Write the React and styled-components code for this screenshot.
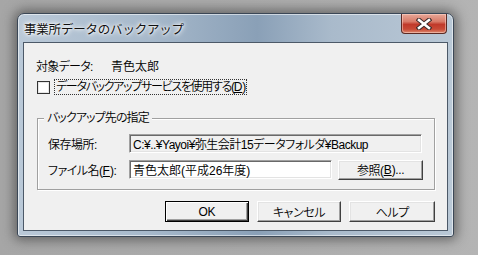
import React from "react";
import styled, { createGlobalStyle } from "styled-components";

const GlobalStyle = createGlobalStyle`
  html, body {
    margin: 0;
    padding: 0;
    background: linear-gradient(90deg, #a6a6a6 0%, #adadad 60%, #b4b4b4 100%);
    width: 478px;
    height: 255px;
    overflow: hidden;
  }
  * {
    box-sizing: border-box;
  }
`;

const Page = styled.div`
  padding: 13px 0 0 17px;
  font-family: "Liberation Sans", "Noto Sans CJK JP", sans-serif;
  font-feature-settings: "palt";
  font-weight: 350;
  font-size: 12px;
  color: #000;
`;

const Window = styled.div`
  width: 437px;
  height: 224px;
  border: 1px solid #3b4756;
  border-radius: 7px 7px 3px 3px;
  background: linear-gradient(90deg, #bac9d8 0%, #a7b9cb 30%, #8aa0b7 55%, #a9bacb 72%, #b9c8d6 100%);
  box-shadow: 0 0 12px 3px rgba(40, 40, 40, 0.55), inset 0 0 0 1px rgba(255, 255, 255, 0.55);
  display: flex;
  flex-direction: column;
`;

const TitleBar = styled.div`
  height: 28px;
  display: flex;
  align-items: flex-start;
  justify-content: space-between;
  padding: 0 6px 0 6px;
`;

const Title = styled.span`
  margin-top: 5px;
  font-family: "Noto Sans CJK JP", sans-serif;
  font-weight: 400;
  font-size: 12.5px;
  font-feature-settings: normal;
  letter-spacing: -0.2px;
  color: #111;
  text-shadow: 0 0 6px #fff, 0 0 4px #fff, 0 0 2px #fff;
`;

const CloseButton = styled.div`
  width: 46px;
  height: 20px;
  border: 1px solid #5b2a24;
  border-top: none;
  border-radius: 0 0 4px 4px;
  background: linear-gradient(180deg, #e8a898 0%, #d87a68 40%, #c0392a 55%, #c84a36 80%, #dc8a70 100%);
  box-shadow: inset 0 0 0 1px rgba(255, 220, 210, 0.5);
  display: flex;
  align-items: center;
  justify-content: center;
`;

const Client = styled.div`
  flex: 1;
  margin: 0 5px 5px 5px;
  border: 1px solid #4c5968;
  background: #f0f0f0;
  padding: 0 12px 0 12px;
  display: flex;
  flex-direction: column;
`;

const InfoRow = styled.div`
  margin-top: 14px;
  height: 16px;
  display: flex;
  align-items: center;
`;

const InfoLabel = styled.span`
  width: 75px;
  letter-spacing: -0.7px;
`;

const CheckRow = styled.div`
  margin-top: 6px;
  height: 16px;
  display: flex;
  align-items: center;
  padding-left: 1px;
`;

const Box = styled.span`
  width: 13px;
  height: 13px;
  background: #fff;
  border: 1px solid #333;
  box-shadow: inset 0 0 0 1px #e6e6e6;
  margin-right: 5px;
`;

const FocusLabel = styled.span`
  outline: 1px dotted #333;
  outline-offset: 0;
  padding: 0 1px;
  line-height: 14px;
  letter-spacing: -1.3px;
`;

const Key = styled.span`
  text-decoration: underline;
  text-underline-offset: 1px;
  letter-spacing: 0;
`;

const GroupBox = styled.div`
  position: relative;
  margin-top: 23px;
  margin-left: 1px;
  width: 398px;
  height: 72px;
  border: 1px solid #a0a0a0;
  box-shadow: 1px 1px 0 #fff, inset 1px 1px 0 #fff;
  padding: 15px 0 0 10px;
  display: flex;
  flex-direction: column;
  gap: 7px;
`;

const GroupLabel = styled.span`
  position: absolute;
  top: -9px;
  left: 6px;
  padding: 0 3px;
  background: #f0f0f0;
  line-height: 16px;
  letter-spacing: -0.9px;
`;

const FieldRow = styled.div`
  display: flex;
  align-items: center;
  height: 19px;
`;

const FieldLabel = styled.span`
  width: 81px;
  letter-spacing: -0.5px;
`;

const Field = styled.div`
  width: ${(p) => p.$width}px;
  height: 19px;
  background: ${(p) => (p.$readOnly ? "#f0f0f0" : "#fff")};
  border: 1px solid;
  border-color: #a0a0a0 #fff #fff #a0a0a0;
  box-shadow: inset 1px 1px 0 #696969, inset -1px -1px 0 #e3e3e3;
  padding: 0 3px;
  display: flex;
  align-items: center;
  white-space: nowrap;
  overflow: hidden;
  letter-spacing: ${(p) => (p.$readOnly ? "-0.5px" : "0")};
  font-feature-settings: ${(p) => (p.$readOnly ? "\"palt\"" : "normal")};
`;

const Button = styled.div`
  width: ${(p) => p.$width}px;
  height: ${(p) => p.$height || 21}px;
  margin-left: ${(p) => p.$gap || 0}px;
  background: #f0f0f0;
  border: 1px solid;
  border-color: ${(p) => (p.$default ? "#000" : "#fff #404040 #404040 #fff")};
  box-shadow: ${(p) =>
    p.$default
      ? "inset 1px 1px 0 #fff, inset -1px -1px 0 #404040, inset -2px -2px 0 #a0a0a0"
      : "inset -1px -1px 0 #a0a0a0, inset 1px 1px 0 #e3e3e3"};
  display: flex;
  align-items: center;
  justify-content: center;
  letter-spacing: -0.4px;
`;

const Footer = styled.div`
  margin-top: 11px;
  display: flex;
  padding-left: 129px;
`;

function CloseGlyph() {
  return (
    <svg width="16" height="12" viewBox="0 0 16 12">
      <path d="M3 2 L13 10 M13 2 L3 10" stroke="#3a2a2a" strokeWidth="4.6" strokeLinecap="square" />
      <path d="M3 2 L13 10 M13 2 L3 10" stroke="#fff" strokeWidth="2.6" strokeLinecap="square" />
    </svg>
  );
}

export default function App() {
  return (
    <Page>
      <GlobalStyle />
      <Window>
        <TitleBar>
          <Title>事業所データのバックアップ</Title>
          <CloseButton>
            <CloseGlyph />
          </CloseButton>
        </TitleBar>
        <Client>
          <InfoRow>
            <InfoLabel>対象データ:</InfoLabel>
            <span>青色太郎</span>
          </InfoRow>
          <CheckRow>
            <Box />
            <FocusLabel>
              データバックアップサービスを使用する(<Key>D</Key>)
            </FocusLabel>
          </CheckRow>
          <GroupBox>
            <GroupLabel>バックアップ先の指定</GroupLabel>
            <FieldRow>
              <FieldLabel>保存場所:</FieldLabel>
              <Field $width={293} $readOnly>
                C:¥..¥Yayoi¥弥生会計15データフォルダ¥Backup
              </Field>
            </FieldRow>
            <FieldRow>
              <FieldLabel>
                ファイル名(<Key>F</Key>):
              </FieldLabel>
              <Field $width={203}>青色太郎(平成26年度)</Field>
              <Button $width={85} $height={20} $gap={6}>
                参照(<Key>B</Key>)...
              </Button>
            </FieldRow>
          </GroupBox>
          <Footer>
            <Button $width={84} $default>
              OK
            </Button>
            <Button $width={85} $gap={8}>
              キャンセル
            </Button>
            <Button $width={86} $gap={8}>
              ヘルプ
            </Button>
          </Footer>
        </Client>
      </Window>
    </Page>
  );
}
